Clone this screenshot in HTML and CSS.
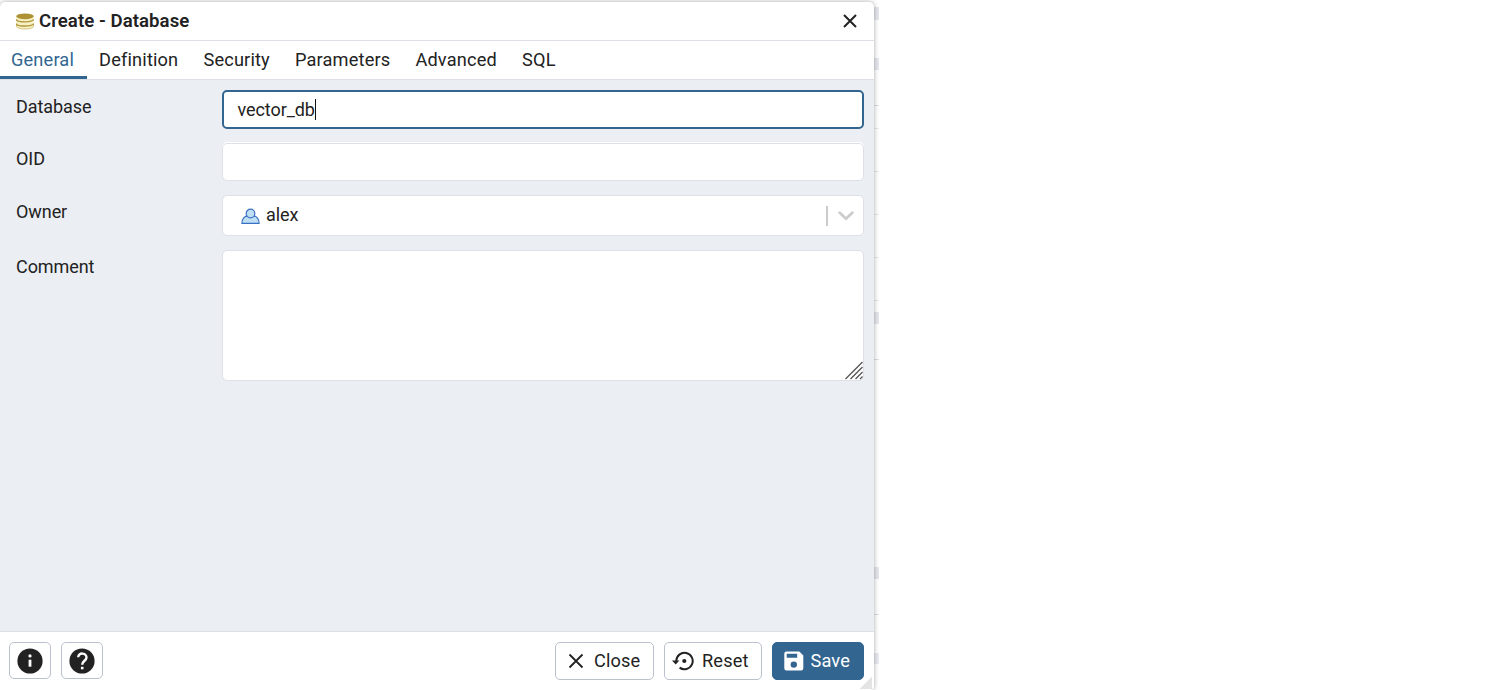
FILE: index.html
```
<!DOCTYPE html>
<html lang="en">
<head>
<meta charset="utf-8">
<title>Create - Database</title>
<link rel="stylesheet" href="styles.css">
</head>
<body>
<div class="workspace">
  <div class="backdrop"></div>
  <section class="dialog">
    <header class="titlebar">
      <svg class="db-icon" width="18" height="17" viewBox="0 0 18 17">
        <path d="M.5 11v2.300c0 3.600 17 3.600 17 0V11z" fill="#f6f1c5" stroke="#cbb76c" stroke-width=".8"/>
        <path d="M.3 7.500v3c0 3.600 17.400 3.600 17.400 0v-3z" fill="#f6f1c5"/>
        <path d="M.3 10.400c0 3.500 17.400 3.500 17.400 0" fill="none" stroke="#b4973a" stroke-width="1.400"/>
        <path d="M.3 3.500v3c0 3.600 17.400 3.600 17.400 0v-3z" fill="#f6f1c5"/>
        <path d="M.3 6.200c0 3.500 17.400 3.500 17.400 0" fill="none" stroke="#b4973a" stroke-width="1.400"/>
        <ellipse cx="9" cy="3.300" rx="8.800" ry="2.900" fill="#ad9134"/>
      </svg>
      <h1 class="title">Create - Database</h1>
      <svg class="title-close" width="14" height="14" viewBox="0 0 14 14"><path d="M1 1l12 12M13 1L1 13" stroke="#222" stroke-width="2"/></svg>
    </header>
    <nav class="tabs">
      <span class="tab active">General</span><span class="tab">Definition</span><span class="tab">Security</span><span class="tab">Parameters</span><span class="tab">Advanced</span><span class="tab">SQL</span>
    </nav>
    <main class="form">
      <div class="row">
        <span class="label">Database</span>
        <div class="field focused">vector_db<i class="caret"></i></div>
      </div>
      <div class="row row-oid">
        <span class="label">OID</span>
        <div class="field"></div>
      </div>
      <div class="row row-owner">
        <span class="label">Owner</span>
        <div class="field select">
          <svg width="19" height="16" viewBox="0 0 19 16" fill="#bfe0f4" stroke="#3a70c4" stroke-width="1.200">
            <path d="M.9 15.400c0-4.600 2.800-7.500 6-7.500h5.200c3.200 0 6 2.900 6 7.500z"/>
            <circle cx="9.500" cy="5.500" r="4.300"/>
          </svg>
          <span class="select-value">alex</span>
          <i class="divider"></i>
          <svg class="chevron" width="16" height="10" viewBox="0 0 16 10"><path d="M1.700 1.800L8 7.700l6.300-5.900" fill="none" stroke="#ccc" stroke-width="2.800" stroke-linecap="round"/></svg>
        </div>
      </div>
      <div class="row row-comment">
        <span class="label">Comment</span>
        <div class="field textarea">
          <svg width="19" height="19" viewBox="0 0 19 19" stroke="#555" stroke-width="1.300"><path d="M1.500 18L18.500 1M6.500 18l12-12M11.500 18l7-7M16 18l2.500-2.500"/></svg>
        </div>
      </div>
    </main>
    <footer class="footer">
      <button class="btn icon-btn"><svg width="26" height="26" viewBox="0 0 26 26"><circle cx="13" cy="13" r="12.600" fill="#222"/><circle cx="13" cy="7.900" r="1.600" fill="#fff"/><path d="M13 11.700v7" stroke="#fff" stroke-width="2.800"/></svg></button>
      <button class="btn icon-btn"><svg width="26" height="26" viewBox="0 0 26 26"><circle cx="13" cy="13" r="12.600" fill="#222"/><path d="M9.200 9.300c0-5.200 8.300-4.800 8.300.2 0 3.100-4.300 3.500-4.300 7.200" fill="none" stroke="#fff" stroke-width="2.400"/><path d="M13.200 18.800v2.500" stroke="#fff" stroke-width="2.600"/></svg></button>
      <button class="btn close"><svg width="16" height="16" viewBox="0 0 16 16"><path d="M1.500 1.500l13 13M14.500 1.500l-13 13" stroke="#222" stroke-width="1.800"/></svg><span>Close</span></button>
      <button class="btn reset"><svg width="22" height="20" viewBox="0 0 22 20"><path d="M4.300 10a8.200 8.200 0 1 1 3.300 6.600" fill="none" stroke="#222" stroke-width="2"/><path d="M0 9.500h7.400L3.700 13.500z" fill="#222"/><circle cx="12.300" cy="10" r="2.100" fill="#222"/></svg><span>Reset</span></button>
      <button class="btn save"><svg width="20" height="20" viewBox="0 0 20 20"><path fill="#fff" fill-rule="evenodd" d="M2.500.5h12.800l4 4v12.800a2.200 2.200 0 0 1-2.200 2.200H2.500a2.200 2.200 0 0 1-2.200-2.200V2.700A2.200 2.200 0 0 1 2.500.5zM2.700 2.800v4h10.500v-4zM9.800 10.400a3.200 3.200 0 1 0 0 6.400 3.200 3.200 0 0 0 0-6.400z"/></svg><span>Save</span></button>
    </footer>
    <i class="grip"></i>
  </section>
</div>
</body>
</html>
```

FILE: styles.css
```
* { box-sizing: border-box; }
body { margin: 0; background: #fff; color: #222; font: 18.2px/26px Roboto, sans-serif; letter-spacing: .15px; }
.workspace { position: relative; width: 879px; height: 690px; overflow: hidden; padding-top: 2px; }
/* Edge of the page that shows behind the dialog */
.backdrop {
  position: absolute; inset: 0;
  background:
    linear-gradient(#e5e7ee, #e5e7ee) 0 7px / 100% 13px,
    linear-gradient(#e5e7ee, #e5e7ee) 0 58px / 100% 12px,
    linear-gradient(#dddfe6, #dddfe6) 0 105px / 100% 1px,
    linear-gradient(#eaebef, #eaebef) 0 128px / 100% 1px,
    linear-gradient(#eaebef, #eaebef) 0 171px / 100% 1px,
    linear-gradient(#eaebef, #eaebef) 0 214px / 100% 1px,
    linear-gradient(#eaebef, #eaebef) 0 257px / 100% 1px,
    linear-gradient(#eaebef, #eaebef) 0 300px / 100% 1px,
    linear-gradient(#e5e7ee, #e5e7ee) 0 312px / 100% 12px,
    linear-gradient(#dddfe6, #dddfe6) 0 359px / 100% 1px,
    linear-gradient(#e5e7ee, #e5e7ee) 0 567px / 100% 12px,
    linear-gradient(#dddfe6, #dddfe6) 0 614px / 100% 1px,
    linear-gradient(#e9ebf1, #e9ebf1) 0 653px / 100% 11px,
    #fff;
  background-repeat: no-repeat;
}
.dialog { position: relative; width: 874px; height: 688px; display: flex; flex-direction: column; background: #fff; border-radius: 5px 5px 4px 0; box-shadow: 0 0 5px rgba(0,0,0,.35); }
.titlebar { height: 39px; display: flex; align-items: center; padding: 0 17px 0 16px; border-bottom: 1px solid #dde0e6; }
.db-icon { margin-right: 5px; }
.title { margin: 0; font-size: 18.600px; font-weight: 600; letter-spacing: .06px; flex: 1; }
.tabs { height: 39px; display: flex; border-bottom: 1px solid #dde0e6; letter-spacing: .165px; }
.tab { padding: 6px 12.550px 0; height: 38px; }
.tab.active { color: #326690; border-bottom: 3px solid #326690; padding-left: 11px; }
.form { height: 551px; background: #ebeef3; padding: 10px 10px 0 16px; font-size: 18px; letter-spacing: -.07px; }
.row { display: flex; height: 53px; }
.label { width: 206px; padding-top: 4px; }
.row-oid .label { padding-top: 3px; }
.row-owner { height: 54px; padding-top: 1px; }
.row-owner .label { padding-top: 2px; }
.row-comment .label { padding-top: 3px; }
.row-comment { padding-top: 1px; height: 132px; }
.field { flex: 1; height: 39px; background: #fff; border: 1px solid #dde0e6; border-radius: 5px; display: flex; align-items: center; padding-left: 14px; }
.focused { border: 2px solid #326690; padding-left: 13.500px; }
.row-oid .field { height: 38px; box-shadow: 0 -1px #fff; }
.caret { width: 1px; height: 21px; background: #111; }
.select { height: 41px; margin-top: -2px; padding: 0 9.500px 0 18px; }
.select-value { margin: -2px 0 0 6px; flex: 1; }
.divider { width: 2px; height: 20px; background: #ccc; margin-right: 9.500px; }
.textarea { height: 131px; margin-top: -1px; align-items: flex-end; justify-content: flex-end; }
.footer { flex: 1; border-top: 1px solid #dde0e6; display: flex; gap: 10px; padding: 10px 10px 0 9px; }
.btn { font: inherit; letter-spacing: inherit; color: inherit; height: 38px; background: #fff; border: 1px solid #bac1cd; border-radius: 5px; display: flex; align-items: center; padding: 0; }
.icon-btn { width: 42px; height: 37px; justify-content: center; }
.close { width: 99px; margin-left: auto; padding-left: 12px; gap: 10px; }
.reset { width: 98px; padding-left: 7px; gap: 8px; }
.save { width: 92px; padding-left: 11px; gap: 6.500px; background: #326690; border-color: #326690; color: #fff; }
.grip { position: absolute; right: 2px; bottom: 1px; width: 12px; height: 12px; background: linear-gradient(135deg, transparent 50%, #e4e4e4 50%); }
```
